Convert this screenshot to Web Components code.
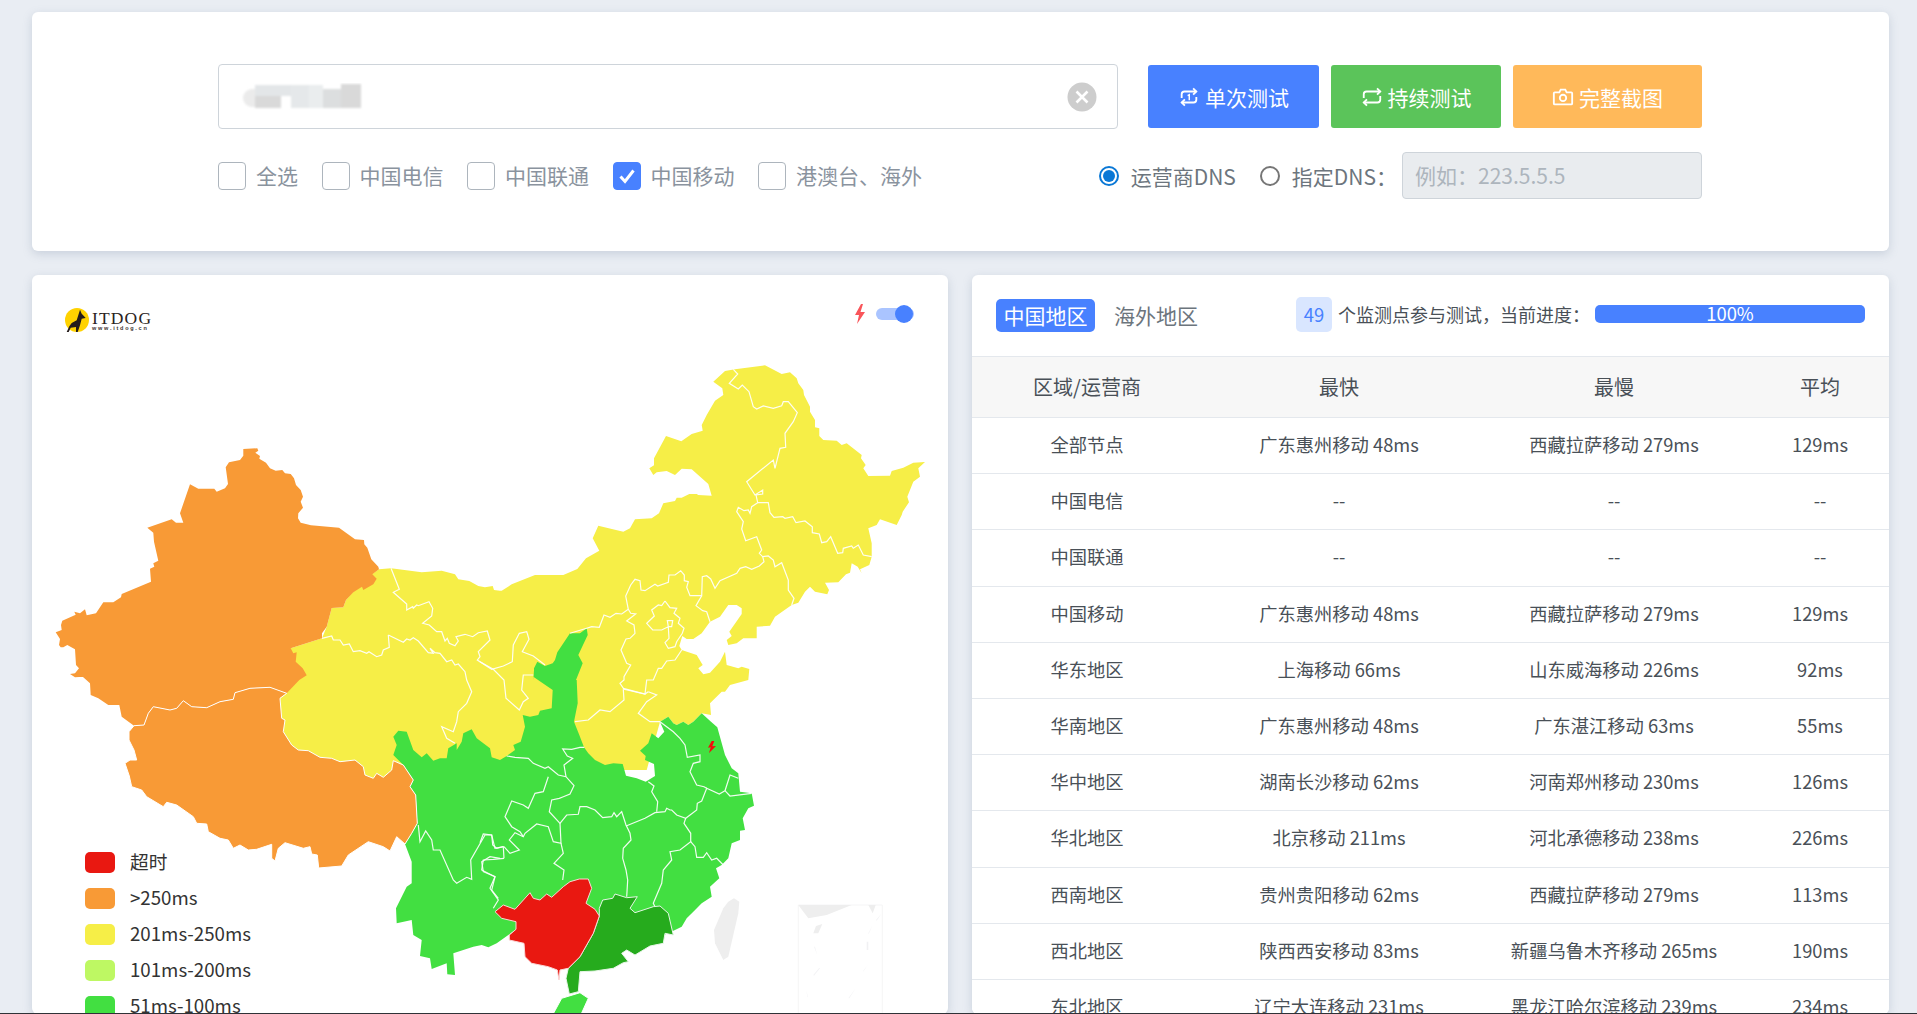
<!DOCTYPE html>
<html lang="zh"><head><meta charset="utf-8"><title>ITDOG</title>
<style>
html,body{margin:0;height:1014px;overflow:hidden;background:#e9edf3;font-family:"Noto Sans CJK SC","Liberation Sans",sans-serif}
</style></head><body>
<app-shell>
  <search-panel slot="top"></search-panel>
  <map-panel slot="left"></map-panel>
  <stats-panel slot="right">
    <stat-row head><span>区域/运营商</span><span>最快</span><span>最慢</span><span>平均</span></stat-row>
    <stat-row><span>全部节点</span><span>广东惠州移动 48ms</span><span>西藏拉萨移动 279ms</span><span>129ms</span></stat-row>
    <stat-row><span>中国电信</span><span>--</span><span>--</span><span>--</span></stat-row>
    <stat-row><span>中国联通</span><span>--</span><span>--</span><span>--</span></stat-row>
    <stat-row><span>中国移动</span><span>广东惠州移动 48ms</span><span>西藏拉萨移动 279ms</span><span>129ms</span></stat-row>
    <stat-row><span>华东地区</span><span>上海移动 66ms</span><span>山东威海移动 226ms</span><span>92ms</span></stat-row>
    <stat-row><span>华南地区</span><span>广东惠州移动 48ms</span><span>广东湛江移动 63ms</span><span>55ms</span></stat-row>
    <stat-row><span>华中地区</span><span>湖南长沙移动 62ms</span><span>河南郑州移动 230ms</span><span>126ms</span></stat-row>
    <stat-row><span>华北地区</span><span>北京移动 211ms</span><span>河北承德移动 238ms</span><span>226ms</span></stat-row>
    <stat-row><span>西南地区</span><span>贵州贵阳移动 62ms</span><span>西藏拉萨移动 279ms</span><span>113ms</span></stat-row>
    <stat-row><span>西北地区</span><span>陕西西安移动 83ms</span><span>新疆乌鲁木齐移动 265ms</span><span>190ms</span></stat-row>
    <stat-row><span>东北地区</span><span>辽宁大连移动 231ms</span><span>黑龙江哈尔滨移动 239ms</span><span>234ms</span></stat-row>
  </stats-panel>
</app-shell>
<script>
function def(name, html, init){
  customElements.define(name, class extends HTMLElement{
    constructor(){super();this.attachShadow({mode:'open'}).innerHTML=typeof html==='function'?html(this):html;}
    connectedCallback(){ if(init&&!this._i){this._i=1;init(this);} }
  });
}
const card='background:#fff;border-radius:6px;box-shadow:0 3px 10px rgba(120,135,160,.28);';

def('app-shell',`<style>
:host{display:flex;flex-direction:column;height:1014px;overflow:hidden}
.top{padding:12px 28px 0 32px;flex:none}
.main{flex:1;min-height:0;overflow:hidden;display:grid;grid-template-columns:916px 917px;gap:24px;padding:24px 28px 0 32px}
.line{height:1px;flex:none;background:#2f3237}
</style><div class="top"><slot name="top"></slot></div>
<div class="main"><slot name="left"></slot><slot name="right"></slot></div><div class="line"></div>`);

def('check-box',h=>`<style>
:host{display:inline-flex;align-items:center;gap:10px;font-size:21px;line-height:28px;color:#8a939e;margin-right:23.500px}
.b{width:26px;height:26px;border:1px solid #adb5bd;border-radius:4px;background:#fff;display:block;flex:none}
.b.on{background:#4881ff;border-color:#4881ff}
svg{display:block;width:26px;height:26px}
span.t{margin-top:-2px}
</style><span class="b ${h.hasAttribute('checked')?'on':''}">${h.hasAttribute('checked')?'<svg viewBox="0 0 26 26"><path d="M6.500 13.500l4.500 5 8.500-11" fill="none" stroke="#fff" stroke-width="3"/></svg>':''}</span><span class="t"><slot></slot></span>`);

def('radio-opt',h=>`<style>
:host{display:inline-flex;align-items:center;gap:12px;font-size:21px;color:#6c757d}
.r{width:20px;height:20px;box-sizing:border-box;border-radius:50%;border:2px solid ${h.hasAttribute('checked')?'#0a78d6':'#767676'};display:flex;align-items:center;justify-content:center;flex:none}
.r i{width:12px;height:12px;border-radius:50%;background:#0a78d6;display:${h.hasAttribute('checked')?'block':'none'}}
</style><span class="r"><i></i></span><slot></slot>`);

def('action-btn',h=>`<style>
:host{display:flex;align-items:center;justify-content:center;gap:5px;height:63px;border-radius:3px;color:#fff;font-size:21px;background:${h.getAttribute('color')};width:${h.getAttribute('w')}px}
::slotted(svg){width:22px;height:22px;display:block}
</style><slot></slot>`);

def('search-panel',`<style>
:host{display:block;height:239px;box-sizing:border-box;padding:52px 187px 0 186px;${card}}
.r1{display:flex;align-items:flex-start}
.field{width:900px;height:65px;box-sizing:border-box;border:1px solid #ced4da;border-radius:4px;display:flex;align-items:center;justify-content:space-between;padding:0 20px 0 22px;margin-right:30px}
.blur{display:block;width:122px;height:27px}
.x{display:block;width:30px;height:30px}
.btns{display:flex;gap:12px;margin-top:1px}
.r2{display:flex;align-items:center;margin-top:23px;height:46px}
.checks{display:flex;align-items:center;flex:1;padding-top:2px}
.dns{display:flex;align-items:center;gap:24px;padding-top:2px}
.ip{width:300px;height:47px;box-sizing:border-box;background:#e9ecef;border:1px solid #ced4da;border-radius:4px;color:#adb5bd;font-size:21px;display:flex;align-items:center;padding-left:12px;margin-left:-19px;margin-top:-2px;white-space:nowrap}
</style>
<div class="r1">
  <div class="field">
    <svg class="blur" viewBox="0 0 122 27"><defs><filter id="b"><feGaussianBlur stdDeviation="1.200"/></filter></defs><g filter="url(#b)">
      <rect x="2" y="6" width="24" height="18" rx="9" fill="#ebebeb"/><rect x="14" y="2" width="36" height="11" fill="#e3e6e8"/><rect x="14" y="13" width="26" height="12" fill="#d9d9d9"/>
      <rect x="50" y="2" width="18" height="23" fill="#e5e8ea"/><rect x="68" y="2" width="14" height="23" fill="#eaedee"/><rect x="82" y="6" width="18" height="19" fill="#dcdedf"/><rect x="100" y="1" width="20" height="24" fill="#d9d9d9"/>
    </g></svg>
    <svg class="x" viewBox="0 0 30 30"><circle cx="15" cy="15" r="14.500" fill="#cdcdcd"/><path d="M9.500 9.500l11 11M20.500 9.500l-11 11" stroke="#fff" stroke-width="2.600"/></svg>
  </div>
  <div class="btns">
    <action-btn color="#4881ff" w="171"><svg viewBox="0 0 24 24" fill="none" stroke="#fff" stroke-width="2"><path d="M4 13V9a3 3 0 0 1 3-3h13"/><path d="M16.500 2.500L20 6l-3.500 3.500"/><path d="M20 12v3a3 3 0 0 1-3 3H4"/><path d="M7.500 21.500L4 18l3.500-3.500"/><path d="M10.500 10.500l1.800-1v6" stroke-width="1.600"/></svg><span>单次测试</span></action-btn>
    <action-btn color="#5bc45a" w="170"><svg viewBox="0 0 24 24" fill="none" stroke="#fff" stroke-width="2"><path d="M3 13V9a3 3 0 0 1 3-3h15"/><path d="M17.500 2.500L21 6l-3.500 3.500"/><path d="M21 11v4a3 3 0 0 1-3 3H3"/><path d="M6.500 21.500L3 18l3.500-3.500"/></svg><span>持续测试</span></action-btn>
    <action-btn color="#ffb95a" w="189"><svg viewBox="0 0 24 24" fill="none" stroke="#fff" stroke-width="2"><path d="M3 7h5l1.500-3h5L16 7h5a1 1 0 0 1 1 1v11a1 1 0 0 1-1 1H3a1 1 0 0 1-1-1V8a1 1 0 0 1 1-1z"/><circle cx="12" cy="13" r="3.500"/></svg><span>完整截图</span></action-btn>
  </div>
</div>
<div class="r2">
  <div class="checks"><check-box>全选</check-box><check-box>中国电信</check-box><check-box>中国联通</check-box><check-box checked>中国移动</check-box><check-box>港澳台、海外</check-box></div>
  <div class="dns"><radio-opt checked>运营商DNS</radio-opt><radio-opt>指定DNS：</radio-opt><div class="ip">例如：223.5.5.5</div></div>
</div>`);

const O={A:[30,340],B:[480,340],C:[30,670],D:[480,670]};
function pts(s){let o=O.A;return s.trim().split(/\s+/).map(t=>{if(O[t]){o=O[t];return null}const[x,y]=t.split(',').map(Number);return (o[0]+x/3).toFixed(1)+','+(o[1]+y/3).toFixed(1)}).filter(Boolean).join(' ');}

const YELLOW=`A 1047,688 1083,685 1175,697 1235,692 1275,703 1285,718 1318,723 1345,738 1365,742 1388,738 1392,750 1410,752
B 65,752 95,733 165,705 250,705 292,687 318,655 358,632 338,595 355,557 430,575 450,565 465,538 515,535 537,520 550,490 585,483 590,473 605,473 628,462 650,462 655,465 695,467 685,432 635,388 605,386 585,405 560,393 530,397 520,405 508,385 522,376 522,355 558,288 604,304 635,282 668,272 665,255 680,225 705,182 730,165 727,145 700,125 735,93 765,88 855,76 905,102 930,97 950,115 955,130 970,150 972,165 990,200 990,215 1005,240 1005,262 1018,265 1018,288 1030,300 1070,302 1085,315 1100,310 1145,345 1143,355 1157,375 1150,385 1165,408 1230,407 1235,393 1270,383 1300,368 1335,366 1315,385 1320,410 1300,425 1282,470 1287,487 1268,515 1265,525 1250,555 1200,538 1190,555 1165,565 1175,610 1175,650 1168,675 1140,688 1145,700 1133,680 1115,670 1110,698 1098,703 1075,727 1035,728 1047,750 1042,763 1005,755 990,740 975,755 955,788 935,795 885,830 870,857 830,860 830,895 790,895 770,910 745,915 740,900 755,888 748,875 785,822 785,805 770,795 745,795 720,830 690,845 665,880 640,897 620,897 607,888 598,918 605,930 650,945 668,975 655,985 670,1003 690,998 720,965 735,935 740,975 775,985 785,980 808,987 805,1020
D 810,0 805,30 750,45 735,65 725,65 690,100 693,135 665,130 640,155 625,165 610,155 590,165 580,160 565,140 540,155 500,300 300,300 60,300
C 1300,300 1120,300 1040,330 700,250 700,60 A 782,925 876,895 890,860 905,804 940,802 948,780 1000,720`;

const GREEN=`B 320,865 323,885 295,945 308,970 288,1020
D 290,30 293,100 282,155 298,195 312,232 325,250 345,270 375,285 400,280 428,282 438,317 470,325 497,335 525,318 522,282 495,270 497,258 480,242 505,220 515,190 535,205 553,185 540,155 565,140 580,160 590,165 610,155 625,165 640,155 665,130 693,155 712,172 735,255 755,295 775,310 780,365 815,370 822,407 805,415 788,445 795,480 780,482 780,510 755,520 745,565 725,585 708,595 718,625 690,650 695,680 665,700 640,725 620,745 605,770 585,780 540,800 300,860 105,780 85,795 50,820 25,832 5,825
C 1330,830 1300,840 1270,850 1275,915 1252,913 1250,880 1205,897 1200,865 1170,858 1175,810 1150,795 1145,750 1100,760 1098,715 1130,650 1145,640 1145,575 1125,522 1145,490 1162,460 1157,375 1140,350 1150,330 1120,285 1090,255 1100,225 1090,200 1105,182 1130,185 1150,240 1175,262 1190,250 1210,272 1230,265 1250,265 1255,235 1280,220 1280,240 1295,215 1300,190 1325,178 1340,205 1380,235 1385,262
D 60,270 80,258 105,240 100,225 122,215 135,170 128,135 150,140 175,135 180,122 215,115 218,60 160,20 160,0
B 162,1020 162,985 172,965 195,978 218,970 225,960 232,937 270,880 300,880`;

const ORANGE1=`A 640,327 682,325 685,332 676,338 690,348 688,356 708,368 720,385 737,392 757,390 765,400 782,402 792,415 798,435 812,450 819,470 812,485 819,503 805,520 804,535 812,548 843,556 927,563 975,598 1002,600 1003,613 1012,623 1024,658 1045,680 1047,688 1027,703 1040,716 1030,733 1000,750 996,740 970,757 948,780 940,802 905,804 890,860 876,880 876,895 782,925 790,940 800,937 797,965 818,985 830,1006 808,1020
C 770,70 720,52 660,55 615,68 610,88 570,95 530,113 485,110 460,92 440,115 420,120 370,110 355,130 342,165 312,167 275,140 268,105 235,105 205,85 182,75 180,40 158,20 135,12
A 160,1010 135,1012 120,1002 135,1000 147,985 138,975 135,928 112,915 100,922 92,922 87,915 90,897 77,877 95,870 93,855 97,842 137,824 133,815 150,820 165,808 170,826 198,820 220,787 250,787 273,772 275,762 363,725 360,686 373,680 370,670 385,662 372,605 370,578 352,563 425,538 438,548 460,548 450,520 480,433 505,446 553,446 560,455 585,445 594,432 587,382 597,367 630,360 640,347`;

const ORANGE2=`C 312,167 342,165 355,130 370,110 420,120 440,115 460,92 485,110 530,113 570,95 610,88 615,68 660,55 720,52 770,70 750,85 755,145 765,150 760,185 785,225 805,240 835,242 870,262 905,265 930,275 975,270 1000,290 1005,315 1030,325 1040,310 1060,322 1085,300 1090,272 1120,285 1150,330 1140,350 1157,375 1162,460 1145,490 1125,522 1100,500 1080,543 1060,530 1015,515 955,555 935,588 866,594 862,555 845,552 840,530 820,535 765,518 745,535 735,573 725,565 725,523 680,538 655,540 630,525 610,535 595,510 570,505 535,485 530,462 500,460 490,440 440,405 410,397 400,410 350,380 335,360 305,350 298,318 285,280 300,270 320,270 312,240 297,210 297,185`;

const RED=`D 45,725 70,705 105,718 150,668 160,685 180,690 200,672 215,682 250,650 270,635 298,627 325,627 335,655 318,700 345,718 358,738 340,790 300,860 265,895 240,900 237,930 232,900 205,890 155,880 135,860 132,820 88,810 88,795 108,778 108,755 65,745`;
const DGREEN=`D 358,715 368,690 398,685 405,672 440,683 472,680 450,715 465,728 520,710 540,708 565,730 580,795 555,790 550,820 510,828 465,855 440,840 425,850 445,875 430,878 400,895 345,903 300,905 295,965 268,972 258,925 265,895 300,860 340,790 358,738`;
const HAINAN=`D 215,1040 245,985 300,968 325,985 300,1040`;
const TAIWAN=`D 762,685 778,695 775,730 745,860 730,870 705,820 702,780 730,715 745,695`;

const LINES=[
`A 1083,685 1108,748 1090,757 1130,792 1130,810 1148,800 1150,805 1160,795 1165,797 1197,785 1208,805 1205,828 1178,850 1198,855 1220,875 1235,875 1245,903 1252,895 1258,910 1275,917 1285,903 1278,890 1305,883 1328,890 1345,878 1372,873 1380,900 1345,935 1350,950 1342,960 1385,988 B 70,978 97,965 100,915 118,880 140,875 147,898 127,935 160,948 195,975`,
`B 270,880 320,865 335,860 358,862 372,825 390,832 408,820 425,822 445,808 437,768 452,735 465,718 480,722 483,750 495,752 525,733 533,738 565,727 567,705 585,705 602,692 613,705 613,722 625,725 620,742 630,767 665,767 667,710 680,707 692,717 705,745 720,722 770,700 780,685 797,680 815,688 838,678 852,665 848,650 838,640 845,630 830,590 797,602 785,567 790,545 770,515 775,502 792,512 805,510 810,520 815,500 833,488 828,465 848,462 848,450 825,465 800,425 880,360 885,385 900,325 917,322 915,280 940,245 952,218 925,185 910,185 905,197 880,205 850,198 830,207 820,200 807,155 787,135 775,147 748,130 773,102 760,88`,
`B 833,488 865,488 870,518 882,532 908,530 915,535 938,530 948,548 975,543 997,560 997,578 1018,582 1025,608 1040,605 1052,590 1073,640 1088,638 1090,625 1115,618 1120,625 1135,615 1150,645 1175,650`,
`B 848,650 865,648 880,660 885,680 905,668 925,720 925,750 942,775 935,795`,
`B 665,767 648,797 668,812 680,815 690,845`,
`B 445,808 452,820 467,822 440,843 462,855 465,880 450,895 438,897 423,930 440,970 452,975 432,1010 432,1020 D 420,40 432,58 495,72 505,65`,
`B 555,783 570,803 590,805 582,820 600,835 595,850 612,865 607,880 590,905 585,920 565,925 555,908 567,895 565,860 575,860 578,842 562,842 565,860 545,870 518,870 500,850 523,828 515,810 535,795 545,797 555,783`,
`B 605,930 585,960 560,963 545,985 535,985 520,1020 D 500,30 495,72 430,55`,
`D 505,65 530,75 500,95 475,130 510,155 540,155`,
`D 430,58 432,90 390,125 360,120 325,150 285,155`,
`A 1075,885 1120,907 1130,897 1140,900 1150,893 1165,903 1195,938 1210,940 1200,925 1215,938 1230,940 1250,965 1265,960 1275,975 1285,972 1305,995 1310,1020 C 1325,65 1310,100 1285,125 1280,155 1270,185 1235,170 1250,205 1275,220`,
`A 876,895 905,888 910,900 930,900 940,915 958,912 970,935 990,932 1010,940 1017,935 1040,950 1055,945 1060,930 1078,922 1075,885`,
`B 0,965 40,988 72,1020 D 78,85 118,120 130,95 145,85 125,60 130,15 160,15`,
`D 80,258 105,262 145,265 160,280 195,295 205,290 235,315 258,320 282,347 270,372 250,380 238,385 215,390 208,425 240,460 260,435 295,433 300,410 320,410 345,420 368,443 395,440 402,428 410,440 425,425 438,465 450,490 453,510 430,535 428,565 438,600 443,630 440,680`,
`D 258,320 252,285 278,265 262,258 248,237 275,238 300,232 313,232`,
`D 438,468 495,445 525,428 555,425 560,415 570,420 575,420 590,435 617,445 650,420 652,400 665,393 680,355 718,372 735,362 750,378 815,370`,
`D 530,425 533,395 515,365 522,348 505,335`,
`D 540,155 580,185 600,205 615,225 622,262 660,255 660,275 640,280 630,305 650,345 672,350 680,355`,
`D 735,362 750,315 775,325`,
`D 617,445 612,460 632,490 632,515 600,540 570,545 575,570 550,600 545,640 520,700 525,710`,
`D 632,515 645,530 650,562 670,562 680,548 695,570 710,565 730,585`,
`D 240,460 243,520 220,515 205,470 170,462 135,490 130,500 105,488 88,510 118,540 90,550 72,530`,
`D 243,520 250,550 222,580 252,600 248,630`,
`D 72,565 70,530 50,535 38,525 35,495 10,492 0,518`,
`D 72,565 40,568 10,570 5,600 45,620 30,655 55,690 40,715`,
`D 130,500 120,485 95,470 75,440 95,393 130,405 145,415 165,370 190,365 205,320`,
`C 1165,465 1170,515 1187,483 1205,510 1210,540 1230,540 1270,630 1280,640 1310,622 1325,628 1322,570 1365,495 1385,495 1395,535 1420,530`,
`C 1410,565 1380,560 1355,575 1360,605 1395,620 1385,660 1405,685`
];

const poly=(s,f,st='#fff')=>`<polygon points="${pts(s)}" fill="${f}" stroke="${st}" stroke-width="1" stroke-linejoin="round"/>`;
const mapSvg=`<svg class="map" viewBox="32 275 916 739" width="916" height="739">
${poly(YELLOW,'#f6ee47','none')}${poly(GREEN,'#42df41','none')}
${poly(ORANGE1,'#f89a36','none')}${poly(ORANGE2,'#f89a36','#fff')}
${LINES.map(l=>`<polyline points="${pts(l)}" fill="none" stroke="#fff" stroke-opacity=".92" stroke-width="1.200"/>`).join('')}
${poly(DGREEN,'#26ab1d','#e6f6e6')}${poly(RED,'#e91811','#fbd6d6')}${poly(HAINAN,'#42df41')}
${poly(TAIWAN,'#eeeeee','none')}
<polyline points="${pts('D 955,1040 955,705 1207,705 1207,1040')}" fill="none" stroke="#f5f5f6" stroke-width="1"/>
${poly('D 955,705 1115,705 1040,735 985,745','#eeeeee','none')}${poly('D 1165,705 1187,705 1178,730','#eeeeee','none')}${poly('D 1000,790 1008,768 1027,762 1015,790','#eeeeee','none')}
${poly('D 1160,815 1165,815 1165,840 1160,840','#f1f1f3','none')}${poly('D 1002,830 1005,830 1012,855','#f3f3f5','none')}${poly('D 1000,915 1018,893 1020,895 1002,917','#f3f3f5','none')}${poly('D 1150,905 1163,885 1150,902','#f3f3f5','none')}${poly('D 978,960 985,982 983,982','#f3f3f5','none')}${poly('D 1105,985 1128,953 1108,985','#f3f3f5','none')}${poly('D 1188,750 1205,730 1190,752','#f3f3f5','none')}${poly('D 1165,790 1178,765 1166,792','#f3f3f5','none')}
<polygon points="${pts('D 695,213 684,233 692,232 687,249 708,228 697,229 703,213')}" fill="#f40c0c"/>
</svg>`;

def('map-panel',`<style>
:host{display:block;position:relative;height:739px;overflow:hidden;${card}}
svg.map{display:block}
.logo{position:absolute;left:33px;top:33px;display:flex;align-items:center;gap:3px}
.logo svg{width:24px;height:24px;display:block}
.brand{font-family:"Liberation Serif",serif;color:#2a2321;font-size:17.500px;line-height:14px;letter-spacing:1.150px;font-weight:400;margin-top:2px}
.url{font-family:"Liberation Sans",sans-serif;font-size:5.500px;line-height:7px;letter-spacing:1.750px;color:#3a3330;font-weight:700}
.sw{position:absolute;left:823px;top:29px;display:flex;align-items:center;gap:11px}
.track{position:relative;width:38px;height:12px;border-radius:6px;background:#aac4ff;display:block}
.track i{position:absolute;right:1px;top:-3px;width:18px;height:18px;border-radius:50%;background:#4881ff}
.bolt{width:10px;height:20px;display:block}
.legend{position:absolute;left:53px;top:577px;display:grid;gap:15px;font-size:18.700px;color:#333}
</style>
${mapSvg}
<div class="logo"><svg viewBox="0 0 24 24"><circle cx="12" cy="12" r="12" fill="#ffd200"/><path d="M1.700 24L4.300 18.300 6.700 15 11.700 12.300 15 1.700 16.700 5.700 20.700 10 16.700 10.700 15 17.300 12.700 24H11V19L5.700 19.700 3.700 24z" fill="#241c1a"/></svg><div><div class="brand">ITDOG</div><div class="url">www.itdog.cn</div></div></div>
<div class="sw"><svg class="bolt" viewBox="0 0 10 20"><path d="M6 0L0 11h4L2 20l8-12H5.500L8 0z" fill="#f9555a"/></svg><span class="track"><i></i></span></div>
<div class="legend"><legend-item color="#e91811">超时</legend-item><legend-item color="#f89a36">&gt;250ms</legend-item><legend-item color="#f6ee47">201ms-250ms</legend-item><legend-item color="#bef863">101ms-200ms</legend-item><legend-item color="#42df41">51ms-100ms</legend-item></div>`);

def('legend-item',h=>`<style>
:host{display:flex;align-items:center;gap:15px;height:21px;white-space:nowrap}
i{display:block;width:30px;height:21px;border-radius:5px;background:${h.getAttribute('color')}}
span{margin-top:-5px}
</style><i></i><span><slot></slot></span>`);

def('stats-panel',`<style>
:host{display:block;height:739px;overflow:hidden;${card}}
.bar{height:81px;box-sizing:border-box;padding:0 23px 0 24px;display:flex;align-items:flex-start}
.pill{margin-top:24px;width:99px;height:33px;padding-bottom:2px;box-sizing:border-box;background:#4881ff;color:#fff;border-radius:5px;font-size:21px;display:flex;align-items:center;justify-content:center}
.other{margin:24px 0 0 19px;height:31px;font-size:21px;color:#6c757d;display:flex;align-items:center}
.badge{margin:22px 6px 0 98px;width:36px;height:35px;padding-bottom:2px;box-sizing:border-box;background:#d9e6ff;color:#4881ff;border-radius:5px;font-size:18.400px;display:flex;align-items:center;justify-content:center}
.txt{margin-top:22px;height:33px;font-size:18px;color:#495057;display:flex;align-items:center;white-space:nowrap;width:257px}
.prog{margin-top:30px;width:270px;height:18px;border-radius:5px;background:#4881ff;color:#fff;font-size:18.400px;line-height:17px;text-align:center}
</style>
<div class="bar"><div class="pill">中国地区</div><div class="other">海外地区</div><div class="badge">49</div><div class="txt">个监测点参与测试，当前进度：</div><div class="prog">100%</div></div>
<slot></slot>`);

def('stat-row',h=>`<style>
:host{display:grid;grid-template-columns:230px 274px 276px 136px;align-items:center;justify-items:center;box-sizing:border-box;height:${h.hasAttribute('head')?'61px':'56.200px'};padding-bottom:${h.hasAttribute('head')?'1px':'3px'};
border-top:1px solid #e4e8ed;font-size:${h.hasAttribute('head')?'20px':'18.300px'};color:#495057;background:${h.hasAttribute('head')?'#f7f7f7':'#fff'}}
</style><slot></slot>`);
</script>
</body></html>
